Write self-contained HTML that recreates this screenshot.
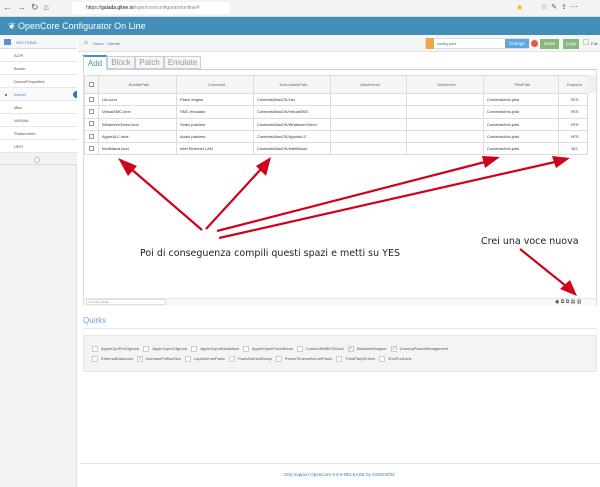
<!DOCTYPE html>
<html><head><meta charset="utf-8"><style>
*{box-sizing:border-box;margin:0;padding:0}
body{width:600px;height:487px;overflow:hidden;font-family:"Liberation Sans",sans-serif;background:#fff;position:relative;font-size:4px;color:#444}
.a{position:absolute}
.sb{left:0;top:35px;width:77px;height:452px;background:#f2f2f2;border-right:1px solid #e0e0e0}
.si{position:absolute;left:0;width:77px;height:13px;background:#fff;border-bottom:1px solid #e6e6e6;font-size:4px;padding-left:14px;line-height:13px;color:#555}
table{border-collapse:collapse;position:absolute;left:84px;top:75px;font-size:4px}
td,th{border:1px solid #ddd;height:12.3px;color:#333;font-weight:normal;padding-left:3px}
th{height:18px;text-align:center;background:#f5f5f5;color:#666}
.cb{width:5px;height:5px;border:1px solid #999;background:#fff;display:inline-block}
.q{display:inline-block;margin-right:4px;font-size:4px;color:#555;vertical-align:middle}
.q i{display:inline-block;width:6px;height:6px;border:1px solid #ccc;background:#fff;margin-right:3px;vertical-align:middle;font-style:normal;color:#4a8ad0;font-size:5px;line-height:5px;text-align:center}
.hand{font-family:"DejaVu Sans",sans-serif;color:#222}
</style></head><body>
<div class="a" style="left:0;top:0;width:600px;height:17px;background:#f3f3f3;border-bottom:1px solid #ddd"></div>
<div class="a" style="left:3px;top:2px;font-size:9px;color:#666">←&nbsp;&nbsp;→&nbsp;&nbsp;↻&nbsp;&nbsp;⌂</div>
<div class="a" style="left:72px;top:2px;width:158px;height:12px;background:#fff;"></div>
<div class="a" style="left:86px;top:5px;font-size:5px;color:#444">https://<b style="font-weight:normal;color:#111">galada.gitee.io</b><span style="color:#888">/opencoreconfiguratoronline/#</span></div>
<div class="a" style="left:516px;top:3px;font-size:8px;color:#f0b400">★</div>
<div class="a" style="left:541px;top:3px;font-size:7px;color:#555">☆&nbsp;&nbsp;✎&nbsp;&nbsp;⇪&nbsp;&nbsp;⋯</div>
<div class="a" style="left:0;top:17px;width:600px;height:18px;background:#438eb9"></div>
<div class="a" style="left:8px;top:21px;font-size:9px;color:#fff">❦ OpenCore Configurator On Line</div>
<div class="a sb"></div>
<div class="a" style="left:0;top:35px;width:77px;height:14px;background:#f7f7f7;border-bottom:1px solid #ddd"></div>
<div class="a" style="left:4px;top:39px;width:7px;height:6px;background:#5b8fcf"></div>
<div class="a" style="left:16px;top:40px;font-size:4px;color:#3d7ec0">SECTIONS</div>
<div class="si" style="top:49px">ACPI</div>
<div class="si" style="top:62px">Booter</div>
<div class="si" style="top:75px">DeviceProperties</div>
<div class="si" style="top:88px;color:#3d7ec0;background:#f7f9fc">Kernel</div>
<div class="a" style="left:5px;top:94px;width:2px;height:2px;background:#e74c3c"></div>
<div class="a" style="left:73px;top:91px;width:4px;height:7px;background:#2c7ac0;border-radius:4px 0 0 4px"></div>
<div class="si" style="top:101px">Misc</div>
<div class="si" style="top:114px">NVRAM</div>
<div class="si" style="top:127px">PlatformInfo</div>
<div class="si" style="top:140px">UEFI</div>
<div class="a" style="left:0;top:154px;width:77px;height:11px;background:#f3f3f3;border-bottom:1px solid #ddd"></div>
<div class="a" style="left:34px;top:157px;width:6px;height:6px;border:1px solid #bbb;border-radius:50%;background:#fff"></div>
<div class="a" style="left:78px;top:35px;width:522px;height:17px;background:#f5f5f5;border-bottom:1px solid #e5e5e5"></div>
<div class="a" style="left:84px;top:40px;font-size:6px;color:#333">⌂</div>
<div class="a" style="left:93px;top:41px;font-size:4px;color:#3d7ec0">Home <span style="color:#aaa">&nbsp;›&nbsp;</span><span style="color:#666">Kernel</span></div>
<div class="a" style="left:425px;top:38px;width:104px;height:11px;border:1px solid #ddd;background:#fff"></div>
<div class="a" style="left:426px;top:38px;width:8px;height:11px;background:#f0a844"></div>
<div class="a" style="left:437px;top:41px;font-size:4px;color:#666">config.plist</div>
<div class="a" style="left:505px;top:39px;width:24px;height:9px;background:#5fa5e0;color:#fff;font-size:4.5px;text-align:center;line-height:9px">Change</div>
<div class="a" style="left:531px;top:40px;width:7px;height:7px;border-radius:50%;background:#e25b3c"></div>
<div class="a" style="left:540px;top:39px;width:19px;height:10px;background:#87b87f;color:#fff;font-size:4.5px;text-align:center;line-height:10px">Down</div>
<div class="a" style="left:563px;top:39px;width:16px;height:10px;background:#87b87f;color:#fff;font-size:4.5px;text-align:center;line-height:10px">Copy</div>
<div class="a" style="left:583px;top:39px;width:6px;height:6px;border:1px solid #ccc"></div>
<div class="a" style="left:591px;top:41px;font-size:4px">Full</div>
<div class="a" style="left:83px;top:69px;width:514px;height:1px;background:#c5d0dc"></div>
<div class="a" style="left:83px;top:55px;width:24px;height:15px;background:#fff;border:1px solid #c5d0dc;border-top:2px solid #4c8fbd;border-bottom:none;font-size:8px;color:#4c8fbd;text-align:center;line-height:13px">Add</div>
<div class="a" style="left:107px;top:56px;width:28px;height:13px;background:#f3f7fa;border:1px solid #c5d0dc;font-size:8px;color:#999;text-align:center;line-height:12px">Block</div>
<div class="a" style="left:135px;top:56px;width:29px;height:13px;background:#f3f7fa;border:1px solid #c5d0dc;font-size:8px;color:#999;text-align:center;line-height:12px">Patch</div>
<div class="a" style="left:164px;top:56px;width:37px;height:13px;background:#f3f7fa;border:1px solid #c5d0dc;font-size:8px;color:#999;text-align:center;line-height:12px">Emulate</div>
<div class="a" style="left:83px;top:70px;width:514px;height:236px;border:1px solid #ddd;border-top:none"></div>
<div class="a" style="left:84px;top:298px;width:512px;height:8px;background:#f8f8f8;border-top:1px solid #e5e5e5"></div>
<div class="a" style="left:86px;top:299px;width:80px;height:6px;border:1px solid #ddd;background:#fff;font-size:3px;color:#888;padding-left:2px">1-5 of 5 results</div>
<div class="a" style="left:555px;top:299px;font-size:5px;color:#444">◉ ⧉ ⧉ ▤ ▥</div>
<table>
<tr><th style="width:14px;padding:0;text-align:center"><span class="cb"></span></th><th style="width:78px">BundlePath</th><th style="width:77px">Comment</th><th style="width:77px">ExecutablePath</th><th style="width:76px">MaxKernel</th><th style="width:77px">MinKernel</th><th style="width:75px">PlistPath</th><th style="width:29px">Enabled</th></tr>
<tr><td style="padding:0;text-align:center"><span class="cb"></span></td><td>Lilu.kext</td><td>Patch engine</td><td>Contents/MacOS/Lilu</td><td></td><td></td><td>Contents/Info.plist</td><td style="text-align:center">YES</td></tr>
<tr><td style="padding:0;text-align:center"><span class="cb"></span></td><td>VirtualSMC.kext</td><td>SMC emulator</td><td>Contents/MacOS/VirtualSMC</td><td></td><td></td><td>Contents/Info.plist</td><td style="text-align:center">YES</td></tr>
<tr><td style="padding:0;text-align:center"><span class="cb"></span></td><td>WhateverGreen.kext</td><td>Video patches</td><td>Contents/MacOS/WhateverGreen</td><td></td><td></td><td>Contents/Info.plist</td><td style="text-align:center">YES</td></tr>
<tr><td style="padding:0;text-align:center"><span class="cb"></span></td><td>AppleALC.kext</td><td>Audio patches</td><td>Contents/MacOS/AppleALC</td><td></td><td></td><td>Contents/Info.plist</td><td style="text-align:center">YES</td></tr>
<tr><td style="padding:0;text-align:center"><span class="cb"></span></td><td>IntelMausi.kext</td><td>Intel Ethernet LAN</td><td>Contents/MacOS/IntelMausi</td><td></td><td></td><td>Contents/Info.plist</td><td style="text-align:center">NO</td></tr>
</table>
<div class="a" style="left:587px;top:75px;width:9px;height:18px;background:#eef2f6"></div>
<svg class="a" style="left:0;top:0" width="600" height="487">
<g stroke="#d0021b" stroke-width="2.2" fill="none">
<line x1="202" y1="230" x2="130" y2="168"/>
<line x1="206" y1="229" x2="262" y2="168"/>
<line x1="217" y1="231" x2="485" y2="162"/>
<line x1="219" y1="238" x2="555" y2="162"/>
<line x1="520" y1="249" x2="566" y2="286"/>
</g>
<g fill="#d0021b">
<polygon points="118,158 137,166 128,176"/>
<polygon points="271,157 266,176 256,166"/>
<polygon points="500,157 485,168 482,156"/>
<polygon points="570,158 556,168 552,156"/>
<polygon points="577,296 560,289 570,280"/>
</g></svg>
<div class="a hand" style="left:140px;top:248px;font-size:9.5px">Poi di conseguenza compili questi spazi e metti su YES</div>
<div class="a hand" style="left:481px;top:236px;font-size:9.5px">Crei una voce nuova</div>
<div class="a" style="left:83px;top:316px;font-size:8px;color:#6aa3d8">Quirks</div>
<div class="a" style="left:83px;top:328px;width:514px;height:1px;background:#e2eaf2"></div>
<div class="a" style="left:83px;top:335px;width:514px;height:37px;background:#f4f4f4;border:1px solid #e6e6e6"></div>
<div class="a" style="left:92px;top:344px;width:510px;line-height:10px">
<span class="q"><i></i>AppleCpuPmCfgLock</span><span class="q"><i></i>AppleXcpmCfgLock</span><span class="q"><i></i>AppleXcpmExtraMsrs</span><span class="q"><i></i>AppleXcpmForceBoost</span><span class="q"><i></i>CustomSMBIOSGuid</span><span class="q"><i>✓</i>DisableIoMapper</span><span class="q"><i>✓</i>DummyPowerManagement</span><br>
<span class="q"><i></i>ExternalDiskIcons</span><span class="q"><i>✓</i>IncreasePciBarSize</span><span class="q"><i></i>LapicKernelPanic</span><span class="q"><i></i>PanicNoKextDump</span><span class="q"><i></i>PowerTimeoutKernelPanic</span><span class="q"><i></i>ThirdPartyDrives</span><span class="q"><i></i>XhciPortLimit</span>
</div>
<div class="a" style="left:81px;top:463px;width:519px;height:1px;background:#e2e2e2"></div>
<div class="a" style="left:78px;top:472px;width:522px;text-align:center;font-size:4.5px;color:#3d7ec0">Only support OpenCore-0.5.6-RELEASE by 2020/03/03</div>
</body></html>
